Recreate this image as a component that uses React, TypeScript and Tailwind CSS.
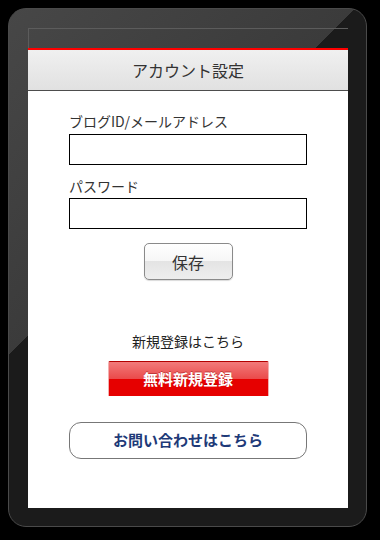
export default function App() {
  const jp = { fontFamily: '"Noto Sans CJK JP", "Noto Sans", sans-serif' };

  return (
    <div className="h-[540px] w-[380px] bg-black pl-2 pt-2" style={jp}>
      {/* bezel */}
      <div className="h-[519px] w-[359px] rounded-[18px] border border-[#4a4a4a] bg-[linear-gradient(135deg,#474747_0%,#3b3b3b_39.5%,#1b1b1b_39.5%,#1b1b1b_100%)] pb-[18px] pl-[19px] pr-[18px] pt-[19px]">
        <div className="flex h-[480px] w-[320px] flex-col">
          {/* status bar */}
          <div className="h-[20px] border-l border-t border-[#5c5c5c]" />
          <div className="h-[2px] bg-[#ff0000]" />

          {/* header */}
          <div className="flex h-[41px] items-center justify-center border-b border-[#4d4d4d] bg-[linear-gradient(#f0f0f0,#e1e1e1)] text-[16px] text-[#333]">
            アカウント設定
          </div>

          {/* content */}
          <div className="flex flex-1 flex-col items-center bg-white pt-[20px]">
            <div className="w-[238px]">
              <label className="block h-[20px] text-[14px] leading-[20px] text-[#333]">ブログID/メールアドレス</label>
              <input type="text" className="mt-[3px] block h-[31px] w-full border border-black bg-white" />
              <label className="mt-[11px] block h-[20px] text-[14px] leading-[20px] text-[#333]">パスワード</label>
              <input type="password" className="mt-[2px] block h-[31px] w-full border border-black bg-white" />
            </div>

            <button className="mt-[14px] h-[37px] w-[89px] rounded-[5px] border border-[#8a8a8a] bg-[linear-gradient(#ffffff_0%,#f6f6f6_50%,#e4e4e4_50%,#eeeeee_100%)] text-[16px] text-[#333] shadow-[0_1px_1px_rgba(0,0,0,0.15)]">
              保存
            </button>

            <p className="mt-[51px] h-[20px] text-[14px] leading-[20px] text-[#222]">新規登録はこちら</p>

            <button className="mt-[10px] h-[35px] w-[161px] rounded-t-[2px] border-x border-t border-x-[#f3b0b0] border-t-[#b30000] bg-[linear-gradient(#f27a7a_0%,#ea4a4a_50%,#e60000_50%,#e60000_100%)] text-[15px] font-bold text-white [text-shadow:0_-1px_0_rgba(120,0,0,0.4)]">
              無料新規登録
            </button>

            <button className="mt-[26px] h-[37px] w-[238px] rounded-[12px] border border-[#777] bg-white text-[15px] font-bold text-[#1e3a78]">
              お問い合わせはこちら
            </button>
          </div>
        </div>
      </div>
    </div>
  );
}
